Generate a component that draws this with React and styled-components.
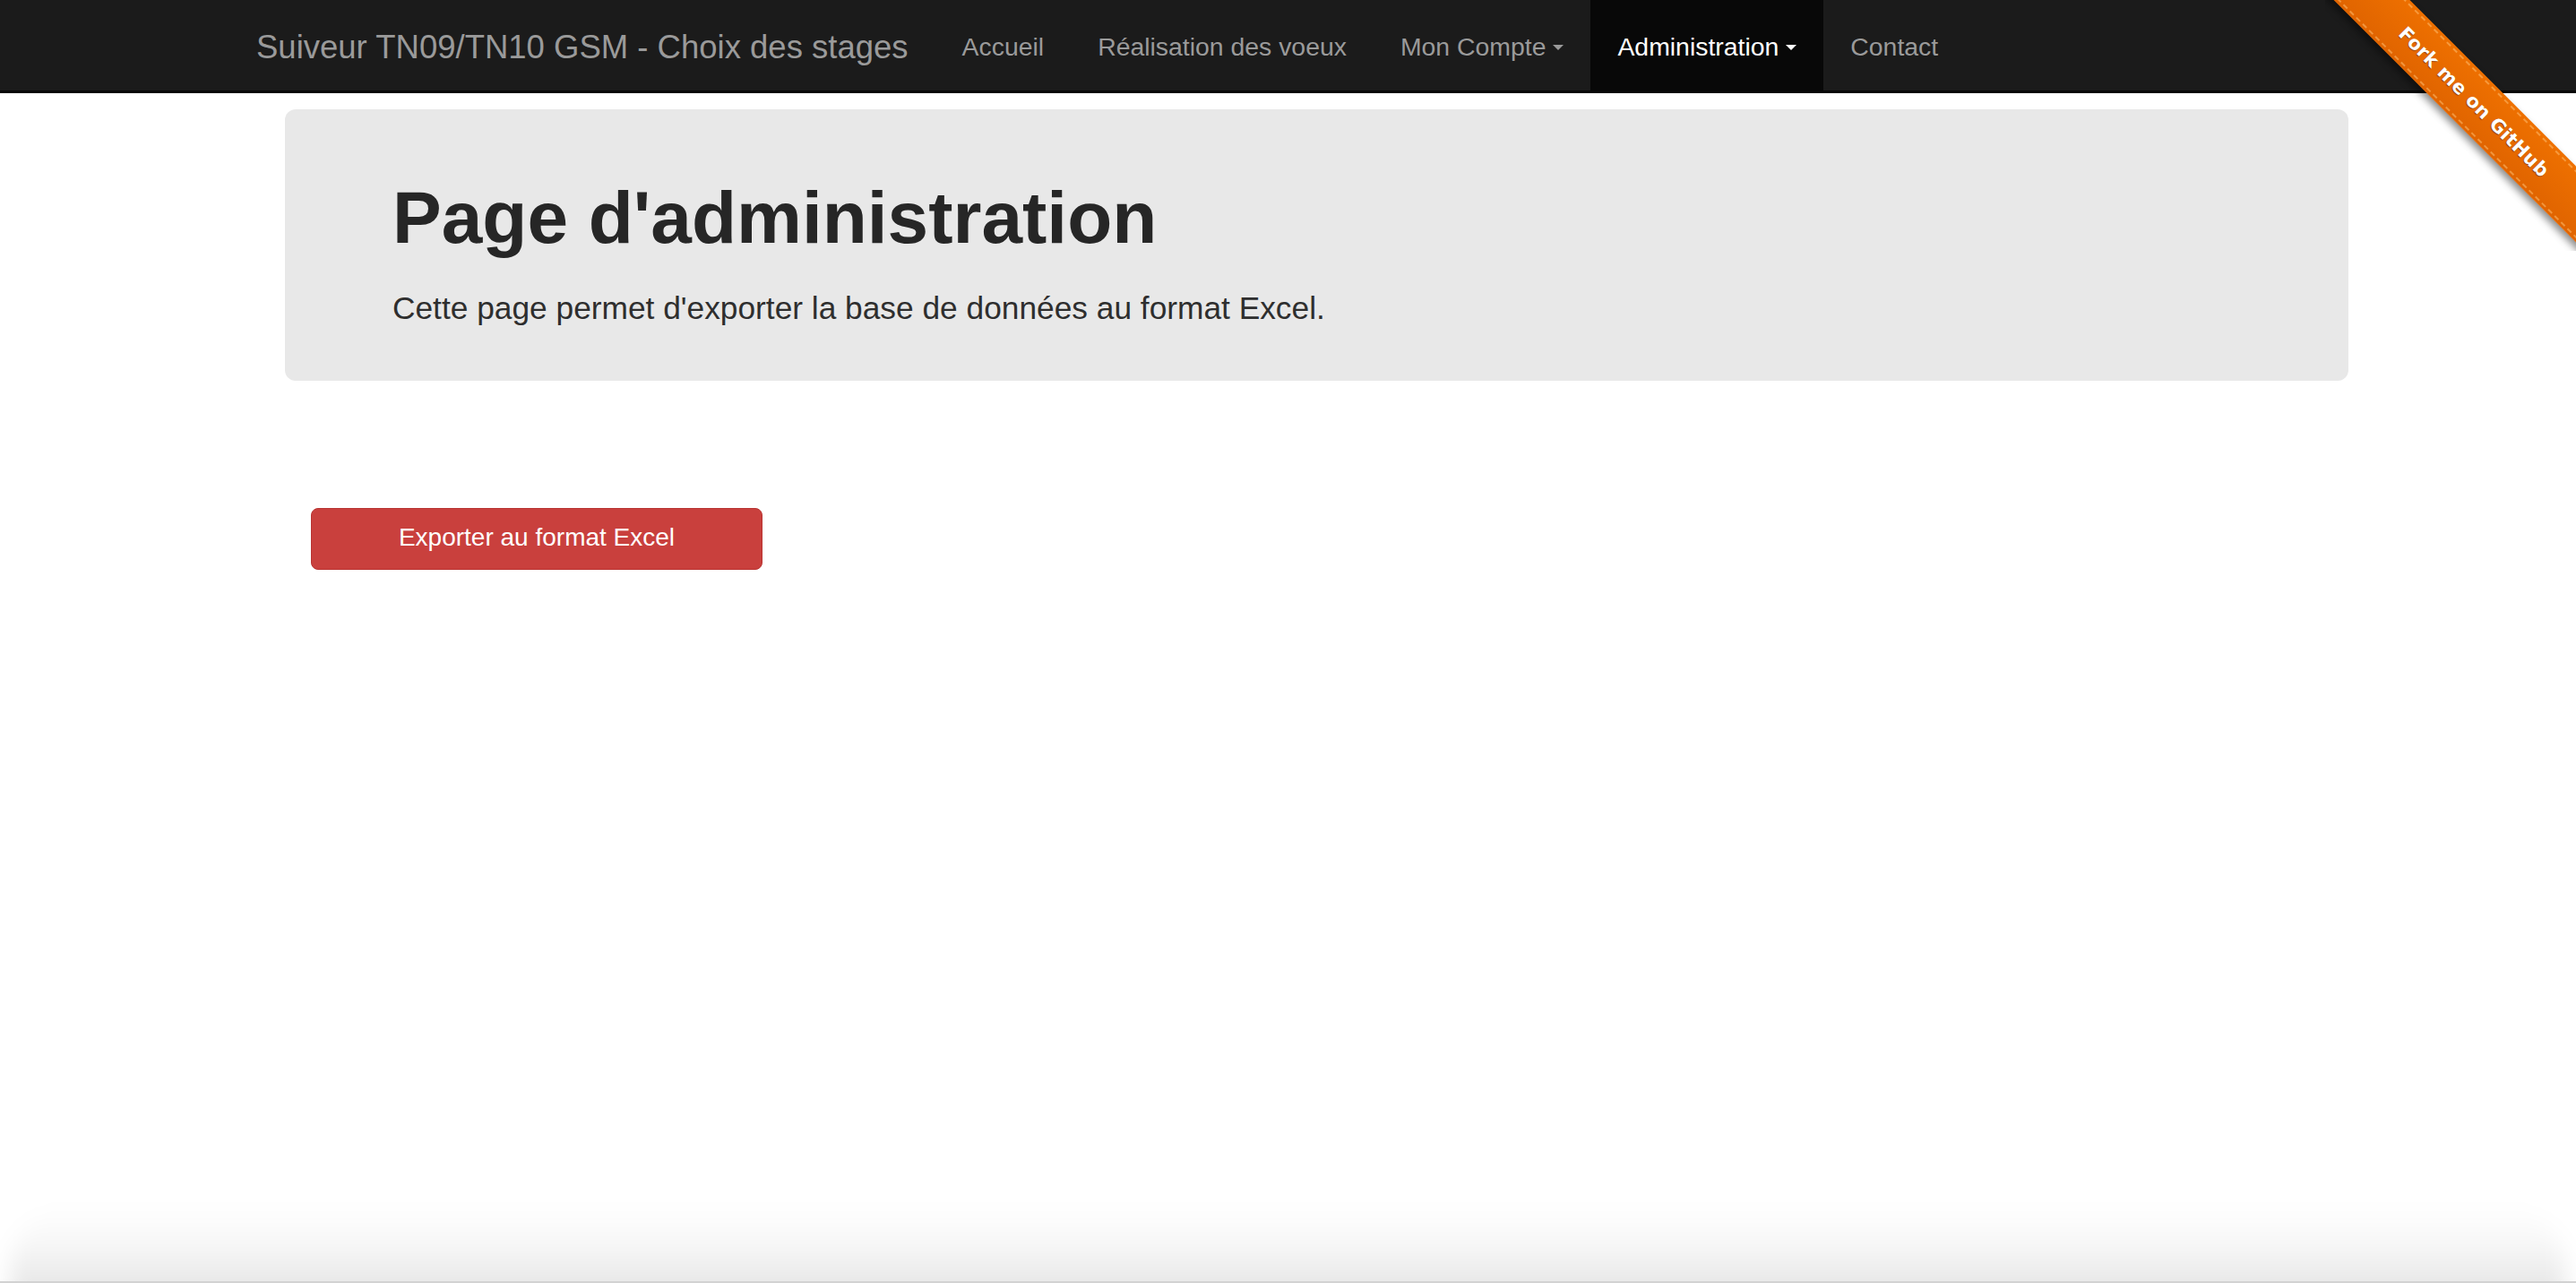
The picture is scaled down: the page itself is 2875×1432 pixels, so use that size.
import React from 'react';
import styled, { createGlobalStyle } from 'styled-components';

const GlobalStyle = createGlobalStyle`
  html, body, #root {
    height: 100%;
  }
  body {
    margin: 0;
    background: #ffffff;
    font-family: "Liberation Sans", Arial, Helvetica, sans-serif;
    color: #333;
  }
`;

const Page = styled.div`
  position: relative;
  min-height: 100vh;
  display: flex;
  flex-direction: column;
  overflow: hidden;
`;

const Navbar = styled.nav`
  height: 101px;
  background: #1b1b1b;
  border-bottom: 3px solid #060606;
`;

const Container = styled.div`
  box-sizing: border-box;
  width: 2363px;
  margin-left: 288px;
  padding: 0 30px;
`;

const NavInner = styled(Container)`
  display: flex;
  align-items: stretch;
  height: 100%;
`;

const Brand = styled.a`
  display: flex;
  align-items: center;
  margin-left: -32px;
  padding: 5px 30px 0 0;
  font-size: 36.5px;
  color: #9a9a9a;
  text-decoration: none;
  white-space: nowrap;
`;

const NavList = styled.ul`
  display: flex;
  margin: 0;
  padding: 0;
  list-style: none;
`;

const NavLink = styled.a`
  display: flex;
  align-items: center;
  height: 100%;
  box-sizing: border-box;
  padding: 3px 30px 0;
  font-size: 28.4px;
  color: ${(p) => (p.$active ? '#ffffff' : '#9a9a9a')};
  background: ${(p) => (p.$active ? '#080808' : 'transparent')};
  text-decoration: none;
  white-space: nowrap;
`;

const Caret = styled.span`
  display: inline-block;
  width: 0;
  height: 0;
  margin-left: 8px;
  margin-top: 2px;
  border-top: 6px solid currentColor;
  border-left: 6px solid transparent;
  border-right: 6px solid transparent;
`;

const Main = styled(Container)`
  flex: 1;
`;

const Jumbotron = styled.div`
  margin-top: 18px;
  padding: 76px 120px 57px;
  background: #e8e8e8;
  border-radius: 12px;
`;

const Title = styled.h1`
  margin: 0;
  font-size: 82px;
  line-height: 1.1;
  font-weight: 700;
  color: #262626;
`;

const Lead = styled.p`
  margin: 31px 0 0;
  font-size: 35.3px;
  line-height: 49px;
  color: #2e2e2e;
`;

const Actions = styled.div`
  margin-top: 142px;
  padding-left: 29px;
`;

const DangerButton = styled.button`
  width: 504px;
  height: 69px;
  padding: 0 0 4px;
  font-family: inherit;
  font-size: 28px;
  color: #ffffff;
  background: #c9403d;
  border: 1px solid #b93331;
  border-radius: 8px;
  cursor: pointer;
`;

const Shade = styled.div`
  position: relative;
  height: 92px;
  overflow: hidden;
  border-bottom: 2px solid #d2d2d2;

  &::before {
    content: '';
    position: absolute;
    left: 12px;
    right: 12px;
    top: 8px;
    bottom: -40px;
    border-radius: 70px 70px 0 0;
    background: linear-gradient(to bottom, rgba(0, 0, 0, 0) 0%, rgba(0, 0, 0, 0.03) 35%, rgba(0, 0, 0, 0.14) 100%);
    filter: blur(12px);
  }
`;

const RibbonBox = styled.div`
  position: absolute;
  top: 0;
  right: 0;
  width: 280px;
  height: 280px;
  overflow: hidden;
  z-index: 10;
  pointer-events: none;
`;

const Ribbon = styled.a`
  position: absolute;
  left: -44px;
  top: 84px;
  width: 420px;
  height: 60px;
  display: flex;
  align-items: center;
  justify-content: center;
  transform: rotate(45deg);
  background: linear-gradient(to bottom, #ee7000, #e06400);
  box-shadow: 0 5px 9px rgba(0, 0, 0, 0.45);
  color: #ffffff;
  font-family: "DejaVu Sans", "Liberation Sans", sans-serif;
  font-size: 21px;
  font-weight: 700;
  letter-spacing: 0.3px;
  text-decoration: none;
  text-shadow: 0 1px 1px rgba(80, 30, 0, 0.6);

  &::before {
    content: '';
    position: absolute;
    left: 0;
    right: 0;
    top: 3px;
    bottom: 3px;
    border-top: 2px dashed rgba(255, 190, 110, 0.55);
    border-bottom: 2px dashed rgba(255, 190, 110, 0.55);
  }
`;

const navItems = [
  { label: 'Accueil' },
  { label: 'Réalisation des voeux' },
  { label: 'Mon Compte', caret: true },
  { label: 'Administration', caret: true, active: true },
  { label: 'Contact' },
];

export default function App() {
  return (
    <Page>
      <GlobalStyle />
      <Navbar>
        <NavInner>
          <Brand href="#">Suiveur TN09/TN10 GSM - Choix des stages</Brand>
          <NavList>
            {navItems.map((item) => (
              <li key={item.label}>
                <NavLink href="#" $active={item.active}>
                  {item.label}
                  {item.caret && <Caret />}
                </NavLink>
              </li>
            ))}
          </NavList>
        </NavInner>
      </Navbar>

      <Main>
        <Jumbotron>
          <Title>Page d'administration</Title>
          <Lead>Cette page permet d'exporter la base de données au format Excel.</Lead>
        </Jumbotron>
        <Actions>
          <DangerButton type="button">Exporter au format Excel</DangerButton>
        </Actions>
      </Main>

      <Shade />

      <RibbonBox>
        <Ribbon href="#">Fork me on GitHub</Ribbon>
      </RibbonBox>
    </Page>
  );
}
